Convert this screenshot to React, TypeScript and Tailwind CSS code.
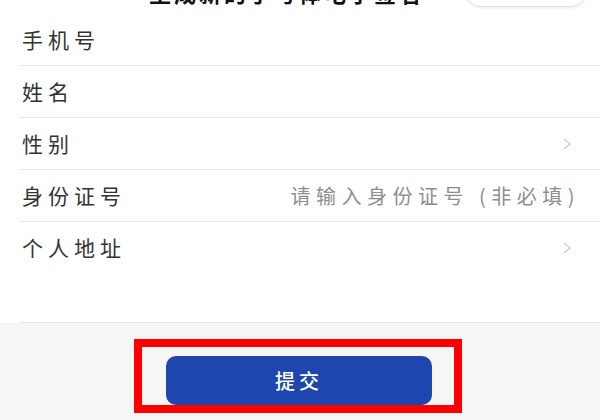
import React from "react";

const font = { fontFamily: '"Noto Sans CJK SC", "Noto Sans", sans-serif' };

function Chevron() {
  return (
    <svg width="10" height="12" viewBox="0 0 10 12" fill="none" className="shrink-0">
      <polyline points="2,1 8,6 2,11" stroke="#c9c9c9" strokeWidth="1.2" strokeLinejoin="round" />
    </svg>
  );
}

type Row = { label: string; placeholder?: string; arrow?: boolean };

const rows: Row[] = [
  { label: "手机号" },
  { label: "姓名" },
  { label: "性别", arrow: true },
  { label: "身份证号", placeholder: "请输入身份证号 (非必填)" },
  { label: "个人地址", arrow: true },
];

export default function App() {
  return (
    <div className="flex h-[420px] w-[600px] flex-col overflow-hidden bg-[#f6f6f6]" style={font}>
      <div className="flex flex-1 flex-col bg-white">
        <header className="flex h-[14px] items-end overflow-hidden pb-[7px]">
          <span className="mb-[5px] ml-[28px] w-[12px] shrink-0 text-[26px] leading-none text-[#222]">‹</span>
          <span className="mb-[4px] ml-[109px] shrink-0 whitespace-nowrap text-[22px] font-bold leading-none tracking-[3px] text-[#111]">
            生成新的手写体电子签名
          </span>
          <div className="ml-auto mr-[13px] flex h-[32px] w-[122px] shrink-0 items-center rounded-full border border-[#e4e4e4] bg-white shadow-[0_1px_3px_rgba(0,0,0,0.08)]">
            <div className="ml-[62px] h-[18px] w-px bg-[#e4e4e4]" />
            <div className="ml-[18px] h-[16px] w-[16px] rounded-full border-[3px] border-[#222]" />
          </div>
        </header>

        <div className="ml-5 flex flex-1 flex-col border-b border-[#e6e6e6]">
          {rows.map((row, i) => (
            <div
              key={row.label}
              className={`flex h-[52px] items-center justify-between pl-[2px] ${
                i < rows.length - 1 ? "border-b border-[#e6e6e6]" : ""
              } ${row.arrow ? "pr-[28px]" : "pr-[20px]"}`}
            >
              <span className="text-[21px] tracking-[5px] text-[#333]">{row.label}</span>
              {row.placeholder && (
                <span className="text-[20px] tracking-[5.5px] text-[#8e8e8e]">{row.placeholder}</span>
              )}
              {row.arrow && <Chevron />}
            </div>
          ))}
        </div>
      </div>

      <footer className="flex h-[97px] shrink-0 items-start pl-[134px] pt-[16px]">
        <div className="border-[8px] border-[#ff0000] pl-[24px] pr-[22px] pt-[9px]">
          <button className="flex h-[49px] w-[266px] items-center justify-center rounded-[10px] bg-[#1d47ae] text-[20px] font-medium tracking-[4px] text-white">
            提交
          </button>
        </div>
      </footer>
    </div>
  );
}
